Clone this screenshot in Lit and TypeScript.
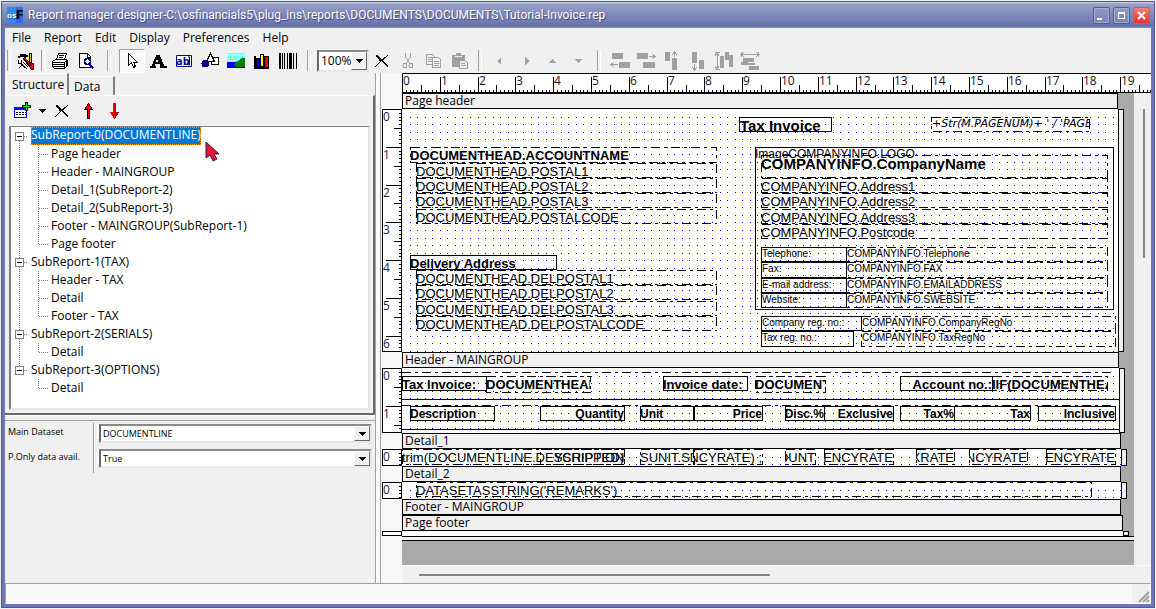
import { LitElement, html, css, svg, nothing, TemplateResult } from "lit";
import { customElement, property } from "lit/decorators.js";
import { styleMap } from "lit/directives/style-map.js";
import { classMap } from "lit/directives/class-map.js";

/* Pixels per centimetre at 100% zoom. */
const CM = 37.8;

interface Field {
  x: number;
  y: number;
  w: number;
  h: number;
  text?: string;
  font?: string;
  kind: "label" | "expr" | "shape";
  right?: boolean;
}

interface Band {
  title: string;
  height: number;
  inset: number;
  fields: Field[];
  rules?: number[];
}

const label = (x: number, y: number, w: number, h: number, text: string, font = "small", right = false): Field => ({ x, y, w, h, text, font, right, kind: "label" });
const expr = (x: number, y: number, w: number, h: number, text: string, font = "body", right = false): Field => ({ x, y, w, h, text, font, right, kind: "expr" });

const BANDS: Band[] = [
  {
    title: "Page header",
    height: 243,
    inset: 16,
    fields: [
      label(337, 8, 92, 15, "Tax Invoice", "title"),
      expr(529, 8, 158, 15, "+Str(M.PAGENUM)+ ' / 'PAGECOUNT", "page"),
      expr(8, 38, 306, 16, "DOCUMENTHEAD.ACCOUNTNAME", "bold"),
      expr(14, 54, 300, 15, "DOCUMENTHEAD.POSTAL1"),
      expr(14, 69, 300, 15, "DOCUMENTHEAD.POSTAL2"),
      expr(14, 84, 300, 15, "DOCUMENTHEAD.POSTAL3"),
      expr(14, 100, 300, 15, "DOCUMENTHEAD.POSTALCODE"),
      label(8, 146, 146, 15, "Delivery Address", "bold"),
      expr(14, 161, 300, 15, "DOCUMENTHEAD.DELPOSTAL1"),
      expr(14, 176, 300, 15, "DOCUMENTHEAD.DELPOSTAL2"),
      expr(14, 192, 300, 15, "DOCUMENTHEAD.DELPOSTAL3"),
      expr(14, 207, 300, 15, "DOCUMENTHEAD.DELPOSTALCODE"),
      { x: 353, y: 38, w: 358, h: 163, kind: "shape", text: "ImageCOMPANYINFO.LOGO", font: "image" },
      expr(359, 46, 346, 23, "COMPANYINFO.CompanyName", "company"),
      expr(359, 69, 346, 15, "COMPANYINFO.Address1"),
      expr(359, 84, 346, 15, "COMPANYINFO.Address2"),
      expr(359, 100, 346, 15, "COMPANYINFO.Address3"),
      expr(359, 115, 346, 15, "COMPANYINFO.Postcode"),
      label(359, 138, 85, 15, "Telephone:"),
      label(359, 153, 85, 16, "Fax:"),
      label(359, 169, 85, 15, "E-mail address:"),
      label(359, 184, 85, 15, "Website:"),
      expr(444, 138, 261, 15, "COMPANYINFO.Telephone", "small"),
      expr(444, 153, 261, 16, "COMPANYINFO.FAX", "small"),
      expr(444, 169, 261, 15, "COMPANYINFO.EMAILADDRESS", "small"),
      expr(444, 184, 261, 15, "COMPANYINFO.SWEBSITE", "small"),
      label(359, 207, 100, 15, "Company reg. no.:"),
      label(359, 222, 92, 16, "Tax reg. no.:"),
      expr(459, 207, 254, 15, "COMPANYINFO.CompanyRegNo", "small"),
      expr(459, 222, 254, 16, "COMPANYINFO.TaxRegNo", "small"),
    ],
  },
  {
    title: "Header - MAINGROUP",
    height: 65,
    inset: 15,
    rules: [31, 61],
    fields: [
      expr(0, 4, 712, 0, ""),
      expr(0, 37, 712, 0, ""),
      label(0, 8, 84, 15, "Tax Invoice:", "bold"),
      expr(84, 8, 104, 17, "DOCUMENTHEAD", "bold"),
      label(261, 8, 84, 15, "Invoice date:", "bold"),
      expr(353, 8, 70, 17, "DOCUMENTHEAD", "bold"),
      label(498, 8, 92, 15, "Account no.:", "bold", true),
      expr(590, 8, 115, 15, "IIF(DOCUMENTHEAD", "bold"),
      label(8, 38, 84, 15, "Description", "head"),
      label(138, 38, 84, 15, "Quantity", "head", true),
      label(238, 38, 54, 15, "Unit", "head"),
      label(291, 38, 69, 15, "Price", "head", true),
      label(383, 38, 39, 15, "Disc.%", "head", true),
      label(422, 38, 69, 15, "Exclusive", "head", true),
      label(498, 38, 54, 15, "Tax%", "head", true),
      label(552, 38, 76, 15, "Tax", "head", true),
      label(636, 38, 77, 15, "Inclusive", "head", true),
    ],
  },
  {
    title: "Detail_1",
    height: 17,
    inset: 13,
    fields: [
      expr(0, 0, 222, 16, "trim(DOCUMENTLINE.DESCRIPTION)"),
      expr(138, 0, 84, 16, "YSHIPPED)", "body", true),
      expr(238, 0, 54, 16, "SUNIT.SDESC"),
      expr(291, 0, 69, 16, "NCYRATE) ;", "body", true),
      expr(383, 0, 30, 16, "DISCOUNT", "body", true),
      expr(422, 0, 69, 16, "CURRENCYRATE", "body", true),
      expr(514, 0, 38, 16, "TAXRATE", "body", true),
      expr(567, 0, 58, 16, "CURRENCYRATE", "body", true),
      expr(644, 0, 69, 16, "CURRENCYRATE", "body", true),
    ],
  },
  {
    title: "Detail_2",
    height: 17,
    inset: 13,
    fields: [expr(14, 0, 675, 15, "DATASETASSTRING('REMARKS')")],
  },
  { title: "Footer - MAINGROUP", height: 0, inset: 13, fields: [] },
  { title: "Page footer", height: 5, inset: 11, fields: [] },
];

const TREE = [
  { name: "SubReport-0(DOCUMENTLINE)", children: ["Page header", "Header - MAINGROUP", "Detail_1(SubReport-2)", "Detail_2(SubReport-3)", "Footer - MAINGROUP(SubReport-1)", "Page footer"] },
  { name: "SubReport-1(TAX)", children: ["Header - TAX", "Detail", "Footer - TAX"] },
  { name: "SubReport-2(SERIALS)", children: ["Detail"] },
  { name: "SubReport-3(OPTIONS)", children: ["Detail"] },
];

/* Two-tone pixel icons, drawn on an 18 x 18 grid. */
const ICONS: Record<string, TemplateResult> = {
  tools: svg`<path d="M3 2h6v1h2v2H9v2H7V5H3v1H1V4h2z" fill="#000"/><path d="M7 6l8 10" stroke="#000" stroke-width="3"/><path d="M8 6l8 10" stroke="#d00" stroke-width="1.500"/><path d="M13 1v11" stroke="#000" stroke-width="3"/><path d="M13 2v8" stroke="#dd0" stroke-width="1"/><path d="M13 11h3v6h-2z" fill="#f00" stroke="#800"/><path d="M1.500 8v3h3V8M3 11l7 6M1.500 16.500l3-3M6 10l5 5" stroke="#000" fill="none"/>`,
  print: svg`<path d="M5.500 7.500l2-6h8l-2 6z" fill="#fff" stroke="#000"/><path d="M8 3.500h5M8 5.500h4" stroke="#000"/><path d="M1.500 9.500l3-2h11l1 1v5l-3 3h-10l-2-2z" fill="#fff" stroke="#000"/><path d="M2 10.500h11l3-2M13.500 11v5M2 12.500h11M2 14.500h11M15.500 9v5" stroke="#000" fill="none"/>`,
  preview: svg`<path d="M2.500 1.500h8l3 3v11h-11z" fill="#fff" stroke="#000"/><path d="M10.500 2v3h3" stroke="#000" fill="none"/><circle cx="10.500" cy="9.500" r="3" fill="#cff" stroke="#000080" stroke-width="1.500"/><path d="M12.500 12l4 4.500" stroke="#0000a0" stroke-width="2"/>`,
  pointer: svg`<path d="M5.500 1.500v12l3-3 2 5 2-1-2-4.500h3.500z" fill="#fff" stroke="#000"/>`,
  label: svg`<path d="M8 3h2l5 11h2v1h-6v-1h1l-1-3H6l-1 3h1v1H1v-1h2zM8 6l-2 4h4z" fill="#000" fill-rule="evenodd" stroke="#000"/>`,
  shapes: svg`<rect x="10.500" y="5.500" width="7" height="7" fill="#fff" stroke="#000"/><path d="M5.500 9.500l4-8 4 8z" fill="#fff" stroke="#000"/><circle cx="4.500" cy="11.500" r="4" fill="#000080"/>`,
  image: svg`<rect x="0" y="1" width="18" height="15" fill="#6ff"/><path d="M0 2.500h18M0 4.500h18M0 6.500h18" stroke="#fff" stroke-dasharray="1 1"/><path d="M0 8.500h11M0 3.500h18" stroke="#bff"/><rect x="4" y="4" width="3" height="3" fill="#ff6"/><path d="M0 10h9l-2 2 5 4H0z" fill="#00f"/><path d="M8 11l3-2 4-3h3v10h-7l-4-3z" fill="#008000"/><path d="M0 15h18v1H0z" fill="#00c"/>`,
  chart: svg`<path d="M1.500 4v11.500h14" stroke="#000" fill="none" stroke-width="2"/><path d="M3.500 6.500h3v9h-3z" fill="#00f" stroke="#000"/><path d="M7.500 2.500h3v12h-3z" fill="#ff0" stroke="#000"/><path d="M11.500 4.500h4v11h-4z" fill="#f00" stroke="#000"/>`,
  barcode: svg`<path d="M1 1v16M12 1v16" stroke="#000" stroke-width="2"/><path d="M3.500 1v16M5.500 1v16M8.500 1v16M10.500 1v16M14.500 1v16M17.500 1v16" stroke="#000"/>`,
  remove: svg`<path d="M3 3h2v1h1v1h1v1h1v1h2V6h1V5h2V4h1V3h1v1h-1v1h-1v1h-1v1h-1v1h-1v1h1v1h1v1h1v1h1v1h1v2h-1v-1h-1v-1h-1v-1h-1v-1h-1v-1H9v-1H8v1H7v1H6v1H5v1H4v1H3v1H2v-1h1v-1h1v-1h1v-1h1v-1h1V9H6V8H6V7H5V6H4V5H3z" fill="#000"/>`,
  cut: svg`<path d="M6.500 1v4l5 7M11.500 1v4l-5 7" stroke="#a0a0a0" fill="none"/><circle cx="6" cy="13.500" r="2" fill="none" stroke="#a0a0a0"/><circle cx="12" cy="13.500" r="2" fill="none" stroke="#a0a0a0"/>`,
  copy: svg`<path d="M1.500 2.500h6l2 2v8h-8z" fill="#f0f0f0" stroke="#a0a0a0"/><path d="M7.500 5.500h6l2 2v8h-8z" fill="#f0f0f0" stroke="#a0a0a0"/><path d="M3 5.500h4M3 7.500h4M3 9.500h4M9 9.500h5M9 11.500h5M9 13.500h5" stroke="#a0a0a0"/>`,
  paste: svg`<path d="M1 3h4V1h5v2h4v12H1z" fill="#a0a0a0"/><path d="M4 4h7" stroke="#f0f0f0"/><path d="M8.500 8.500h5l3 2v6h-8z" fill="#f0f0f0" stroke="#a0a0a0"/><path d="M10 11.500h4M10 13.500h5" stroke="#a0a0a0"/>`,
  left: svg`<path d="M10 5v8L6 9z" fill="#a0a0a0"/>`,
  right: svg`<path d="M8 5v8l4-4z" fill="#a0a0a0"/>`,
  up: svg`<path d="M5 11h8L9 7z" fill="#a0a0a0"/>`,
  down: svg`<path d="M5 7h8l-4 4z" fill="#a0a0a0"/>`,
  alignLeft: svg`<path d="M1 1h11v6H1zM8 10h11v6H8z" fill="#a0a0a0"/><path d="M0 12.500h7M3 10l-3 2.500L3 15" stroke="#a0a0a0" fill="none"/>`,
  alignRight: svg`<path d="M0 1h11v6H0zM6 10h12v6H6z" fill="#a0a0a0"/><path d="M12 4.500h6M15 2l3 2.500L15 7" stroke="#a0a0a0" fill="none"/>`,
  alignTop: svg`<path d="M2 0h5v9H2zM9 6h5v12H9z" fill="#a0a0a0"/><path d="M11.500 0v5M9 3l2.500-3L14 3" stroke="#a0a0a0" fill="none"/>`,
  alignBottom: svg`<path d="M3 0h5v11H3zM10 8h5v9h-5z" fill="#a0a0a0"/><path d="M5.500 12v6M3 15l2.500 3L8 15" stroke="#a0a0a0" fill="none"/>`,
  spaceV: svg`<path d="M5 4h4v12H5zM10 0h4v8h-4zM14 3h4v12h-4z" fill="#a0a0a0"/><path d="M2 1v16M0 4l2-3 2 3M0 14l2 3 2-3M0 .5h5M0 17.500h5" stroke="#a0a0a0" fill="none"/>`,
  spaceH: svg`<path d="M2 6h11v4H2zM0 10h7v3H0zM8 14h10v4H8zM5 11h9v2H5z" fill="#a0a0a0"/><path d="M0 2.500h18M3 0L0 2.500 3 5M15 0l3 2.500L15 5M.5 0v5M17.500 0v5" stroke="#a0a0a0" fill="none"/>`,
  addTable: svg`<rect x="1.500" y="5.500" width="12" height="10" fill="#fff" stroke="#00f"/><path d="M1 6.500h13" stroke="#00f" stroke-width="3"/><path d="M3 10.500h10M3 12.500h10" stroke="#000" stroke-dasharray="2 1"/><path d="M13.500 0v9M9 4.500h9" stroke="#000" stroke-width="3"/><path d="M13.500 1v7M10 4.500h7" stroke="#0f0" stroke-width="1"/>`,
  moveUp: svg`<path d="M9.500 1.500l-4 6h3v9h2v-9h3z" fill="#f00" stroke="#000"/>`,
  moveDown: svg`<path d="M9.500 16.500l-4-6h3v-9h2v9h3z" fill="#f00" stroke="#f00"/><path d="M9.500 16.500l4-6h-3v-9" stroke="#900" fill="none"/>`,
};

const icon = (name: string) => html`<svg class="icon" viewBox="0 0 18 18" width="18" height="18" shape-rendering="crispEdges" aria-hidden="true">${ICONS[name]}</svg>`;

@customElement("report-band")
export class ReportBand extends LitElement {
  @property({ attribute: false }) band!: Band;

  static styles = css`
    :host { display: block; }
    .caption {
      display: block; box-sizing: border-box; height: 16px; margin-left: 20px;
      border: 1px solid #000; background: #f0f0f0; color: #000;
      font: 12px/14px "Open Sans", "Noto Sans", sans-serif; padding-left: 2px;
    }
    .row { display: grid; grid-template-columns: 20px 1fr 6px; }
    .ruler { display: block; background: #fff; }
    .num { font: 12px "Open Sans", "Noto Sans", sans-serif; fill: #223; }
    .surface { position: relative; background: #fff; overflow: hidden; }
    .grid, .frames { position: absolute; left: 0; top: 0; }
    .handle { box-sizing: border-box; border: 1px solid #000; background: #f0f0f0; }
    .field { position: absolute; overflow: hidden; white-space: pre; color: #000; font-family: "Liberation Sans", Arial, sans-serif; display: flex; }
    .right { justify-content: flex-end; }
    .body { font-size: 13px; line-height: 17px; }
    .bold { font-size: 13px; line-height: 17px; font-weight: bold; }
    .head { font-size: 12px; line-height: 16px; font-weight: bold; }
    .small { font-size: 10px; line-height: 14px; padding-left: 1px; }
    .title { font-size: 15px; line-height: 18px; font-weight: bold; padding-left: 1px; }
    .company { font-size: 15px; line-height: 18px; font-weight: bold; }
    .page { font: italic 11px/14px "DejaVu Sans", sans-serif; padding-left: 1px; }
    .image { font-size: 12px; line-height: 14px; }
  `;

  private ruler(h: number) {
    let d = "";
    for (let i = 1; i * CM / 10 < h - 1; i++) {
      const y = Math.round((i * CM) / 10) + 0.5;
      d += `M${i % 10 === 0 ? 4 : i % 5 === 0 ? 12 : 17} ${y}H20`;
    }
    const nums = h < 10 ? [] : Array.from({ length: Math.floor(h / CM) + 1 }, (_, i) => i);
    return html`<svg class="ruler" width="20" height=${h} shape-rendering="crispEdges">
      <rect x="0.5" y="0.5" width="19" height=${h - 1} fill="none" stroke="#000"></rect>
      <path d=${d} stroke="#000"></path>
      ${nums.map((n) => svg`<text class="num" x="1" y=${Math.round(n * CM) + 12}>${n}</text>`)}
    </svg>`;
  }

  private dots(h: number) {
    let d = "";
    for (let y = 1; y * CM / 5 < h - 1; y++)
      for (let x = 1; x < 96; x++) d += `M${Math.round((x * CM) / 5)} ${Math.round((y * CM) / 5) + 0.5}h1`;
    return html`<svg class="grid" width="100%" height=${h} shape-rendering="crispEdges"><path d=${d} stroke="#0000ff"></path></svg>`;
  }

  render() {
    const { title, height, inset, fields, rules } = this.band;
    return html`
      <div class="caption" style=${styleMap({ marginRight: `${inset}px` })}>${title}</div>
      ${height === 0 ? nothing : html`
        <div class="row" style=${styleMap({ marginRight: `${inset - 6}px` })}>
          ${this.ruler(height)}
          <div class="surface">
            ${this.dots(height)}
            ${fields.map((f) => f.text
              ? html`<span class=${classMap({ field: true, [f.font ?? "body"]: true, right: !!f.right })}
                  style=${styleMap({ left: `${f.x}px`, top: `${f.y}px`, width: `${f.w}px`, height: `${f.h + 1}px` })}>${f.text}</span>`
              : nothing)}
            <svg class="frames" width="100%" height=${height} shape-rendering="crispEdges">
              ${fields.map((f) => svg`<path fill="none" stroke="#000" stroke-dasharray=${f.kind === "expr" ? "9 4 3 4" : "none"}
                d=${f.h ? `M${f.x + 0.5} ${f.y + 0.5}h${f.w}v${f.h - 1}h${-f.w}z` : `M${f.x} ${f.y + 0.5}h${f.w}`}></path>`)}
              ${(rules ?? []).map((y) => svg`<path d=${`M0 ${y + 0.5}H2000`} stroke="#000"></path>`)}
            </svg>
          </div>
          <div class="handle"></div>
        </div>`}
    `;
  }
}

@customElement("app-root")
export class AppRoot extends LitElement {
  static styles = css`
    :host { display: block; height: 100vh; box-sizing: border-box; padding: 1px; background: #eef1f8; font: 12px/16px "Open Sans", "Noto Sans", sans-serif; color: #000; }
    * { box-sizing: border-box; }
    button, select { font: inherit; color: inherit; }
    .window { height: 100%; display: flex; flex-direction: column; border: solid #4f5b96; border-width: 1px; background: #6c78b2; padding: 0 3px 3px; }
    .title { flex: none; height: 26px; margin: 0 -3px; padding: 0 4px; display: flex; align-items: center; gap: 3px; color: #fff; background: linear-gradient(#c0c6e0 0 1px, #969fc9 2px, #7580b4 70%, #6570a8 90%, #7a86bc); text-shadow: 1px 1px 1px #3b4679; }
    .title h1 { flex: 1; margin: 0 0 0 2px; font: 400 12px/20px Roboto, "Open Sans", sans-serif; white-space: nowrap; overflow: hidden; }
    .logo { display: block; margin-left: 1px; }
    .logo-text { font: bold 8px "Liberation Sans", sans-serif; fill: #fff; }
    .logo-mark { font: bold 12px "Liberation Sans", sans-serif; fill: #001; }
    .sys { width: 17px; height: 17px; padding: 0; border: 1px solid #4e5a98; border-radius: 2px; background: linear-gradient(#929bc8, #7681b6); display: grid; place-items: center; box-shadow: inset 0 0 0 1px #a5adcf; }
    .close { background: linear-gradient(#f08078, #e83028); border-color: #c85a68; box-shadow: none; }
    .menu { flex: none; height: 20px; display: flex; gap: 13px; padding: 0 7px; background: #f0f0f0; }
    .menu button { border: 0; background: none; padding: 0; line-height: 18px; }
    .tools { flex: none; height: 25px; display: flex; align-items: center; background: #f0f0f0; }
    .sep { height: 21px; display: flex; justify-content: center; }
    .sep::before { content: ""; width: 2px; border-left: 1px solid #a0a0a0; border-right: 1px solid #fff; }
    .s8 { width: 8px; } .s14 { width: 14px; } .s16 { width: 16px; } .s20 { width: 20px; }
    .tool { width: 26px; height: 24px; padding: 0; border: 0; background: none; display: grid; place-items: center; }
    .pressed { background: #f8f8f8; border: 1px solid; border-color: #a0a0a0 #fff #fff #a0a0a0; }
    .icon { display: block; overflow: visible; }
    .abtext { font: bold 11px "Open Sans", sans-serif; fill: #000080; }
    .combo { position: relative; display: block; border: 2px solid; border-color: #8a8a8a #e8e8e8 #e8e8e8 #696969; background: #fff; height: 19px; }
    .combo select { display: block; width: 100%; height: 100%; appearance: none; border: 0; background: #fff; padding: 0 16px 0 2px; outline: 0; }
    .drop { position: absolute; right: 0; top: 0; bottom: 0; width: 16px; background: #f0f0f0; border: 1px solid; border-color: #fff #696969 #696969 #fff; display: grid; place-items: center; pointer-events: none; }
    .zoom { width: 52px; height: 22px; }
    .main { flex: 1; min-height: 0; display: grid; grid-template-columns: 370px 6px minmax(0, 1fr); background: #f0f0f0; }
    .side { display: flex; flex-direction: column; min-width: 0; }
    .tabs { display: flex; align-items: flex-end; height: 22px; padding-left: 1px; }
    .tabs button { border: 0; border-right: 2px solid #808080; border-top: 1px solid #fff; background: #f0f0f0; text-align: left; padding: 0 0 0 5px; height: 19px; width: 46px; line-height: 17px; }
    .tabs .active { height: 22px; width: 63px; line-height: 18px; border-left: 1px solid #fff; }
    .page { flex: none; display: flex; flex-direction: column; border: solid; border-width: 1px 2px 2px 0; border-color: #fff #696969 #696969 #fff; padding: 0 3px 3px 4px; height: 320px; }
    .treebar { flex: none; display: flex; align-items: center; height: 30px; }
    .treebar button { border: 0; padding: 0; background: none; width: 26px; height: 24px; display: grid; place-items: center; }
    .treebar .arrow { width: 14px; }
    .tree { position: relative; flex: 1; background: #fff; border: solid; border-width: 1px 2px 2px; border-color: #808080 #e3e3e3 #e3e3e3 #808080; }
    .tree ul { margin: 0; padding: 0; list-style: none; }
    .node { display: flex; height: 18px; line-height: 16px; align-items: center; white-space: nowrap; }
    .node svg { flex: none; display: block; }
    .selected { background: #0078d7; color: #fff; outline: 1px dotted #f90; outline-offset: -1px; height: 18px; }
    .cursor { position: absolute; left: 194px; top: 14px; }
    .split { height: 6px; border-top: 1px solid #fff; border-bottom: 1px solid #a0a0a0; }
    .props { display: grid; grid-template-columns: 87px minmax(0, 1fr); font-size: 9px; align-content: start; padding: 2px 3px 0 2px; }
    .props label { padding: 3px 0 0 1px; height: 25px; line-height: 12px; border-right: 1px solid #a0a0a0; }
    .props .combo { margin: 1px 0 5px 5px; box-shadow: -4px -2px 0 -2px #fff; }
    .gutter { border: solid #a0a0a0; border-width: 0 1px 0 1px; background: #fafafa; }
    .designer { display: grid; grid-template-rows: 20px minmax(0, 1fr) 18px; background: #f8f8fb; min-width: 0; padding-left: 1px; }
    .hruler { display: block; width: calc(100% - 20px); height: 20px; margin-left: 20px; overflow: hidden; background: #fff; }
    .num { font: 12px "Open Sans", "Noto Sans", sans-serif; fill: #112; }
    .view { display: grid; grid-template-columns: minmax(0, 1fr) 17px; min-height: 0; }
    .paper { overflow: hidden; background: linear-gradient(to right, #f8f8fb 20px, #a9a9a9 20px); }
    .end { height: 5px; margin-left: 20px; border: solid #000; border-width: 1px 0; background: #f0f0f0; }
    .vscroll { background: #f0f0f0; padding: 16px 0 0 9px; }
    .vthumb { width: 2px; height: 149px; background: #858585; }
    .hscroll { background: #f0f0f0; margin-left: 20px; padding: 8px 0 0 17px; border-top: 1px solid #fff; }
    .hthumb { width: 48%; height: 2px; background: #858585; }
    .status { flex: none; height: 21px; background: #f9f9fc; border: 1px solid; border-color: #a0a0a0 #fff #fff #a0a0a0; display: flex; justify-content: flex-end; align-items: flex-end; }
    .grip { display: block; background: #f0f0f0; }
  `;

  private tool(name: string, title: string, pressed = false) {
    return html`<button class=${classMap({ tool: true, pressed })} title=${title} aria-label=${title}>${icon(name)}</button>`;
  }

  private drop() {
    return html`<span class="drop"><svg width="7" height="4" shape-rendering="crispEdges"><path d="M0 0h7L3.500 4z"></path></svg></span>`;
  }

  private guide(child: boolean, first: boolean, last: boolean, lastGroup: boolean) {
    const d = child
      ? `${lastGroup ? "" : "M8.500 0V18"}M27.500 0V${last ? 9 : 18}M28 9.500H37`
      : `M13 9.500H17${first ? "" : "M8.500 0V5"}${lastGroup ? "" : "M8.500 14V18"}`;
    return html`<svg width=${child ? 40 : 20} height="18" shape-rendering="crispEdges">
      <path d=${d} fill="none" stroke="#808080" stroke-dasharray="1 1"></path>
      ${child ? nothing : svg`<rect x="4.500" y="5.500" width="8" height="8" fill="#fff" stroke="#808080"></rect><path d="M6 9.500h5" stroke="#000"></path>`}
    </svg>`;
  }

  private horizontalRuler() {
    let d = "";
    for (let i = 0; i < 200; i++) {
      const x = Math.round((i * CM) / 10) + 0.5;
      d += `M${x} ${i % 10 === 0 ? 4 : i % 5 === 0 ? 12 : 17}V20`;
    }
    return html`<svg class="hruler" shape-rendering="crispEdges">
      <path d=${d} stroke="#000"></path>
      <path d="M0 .5H3000M0 19.500H3000M.5 0V20" stroke="#000"></path>
      ${Array.from({ length: 20 }, (_, n) => svg`<text class="num" x=${Math.round(n * CM) + 1} y="12">${n}</text>`)}
    </svg>`;
  }

  render() {
    return html`
      <div class="window">
        <header class="title">
          <svg class="logo" width="16" height="16"><rect width="16" height="16" fill="#2f6fe0"></rect><rect width="9" height="16" fill="#3d84f0"></rect><text class="logo-text" x="0" y="11">os</text><text class="logo-mark" x="9" y="12">F</text></svg>
          <h1>Report manager designer-C:\\osfinancials5\\plug_ins\\reports\\DOCUMENTS\\DOCUMENTS\\Tutorial-Invoice.rep</h1>
          <button class="sys" aria-label="Minimize"><svg width="11" height="11"><path d="M1 9h5" stroke="#fff" stroke-width="2"></path></svg></button>
          <button class="sys" aria-label="Maximize"><svg width="11" height="11" shape-rendering="crispEdges"><path d="M2.500 3v5.500h6V3zM2 2.500h7" fill="none" stroke="#fff"></path></svg></button>
          <button class="sys close" aria-label="Close"><svg width="11" height="11"><path d="M2 2l7 7M9 2L2 9" stroke="#fff" stroke-width="2"></path></svg></button>
        </header>
        <nav class="menu">${["File", "Report", "Edit", "Display", "Preferences", "Help"].map((m) => html`<button>${m}</button>`)}</nav>
        <div class="tools" role="toolbar">
          <span class="sep s8"></span>${this.tool("tools", "Page setup")}
          <span class="sep s8"></span>${this.tool("print", "Print")}${this.tool("preview", "Preview")}
          <span class="sep s20"></span>${this.tool("pointer", "Select", true)}${this.tool("label", "Label")}
          <button class="tool" aria-label="Expression"><svg class="icon" width="18" height="18"><path d="M1.500 3.500h15v11h-15z" fill="#fff" stroke="#000080"></path><path d="M13 5h1.500v8H13" fill="none" stroke="#000"></path><text class="abtext" x="1" y="13">ab</text></svg></button>
          ${this.tool("shapes", "Shape")}${this.tool("image", "Image")}${this.tool("chart", "Chart")}${this.tool("barcode", "Barcode")}
          <span class="sep s16"></span>
          <label class="combo zoom"><select aria-label="Zoom"><option>100%</option></select>${this.drop()}</label>
          ${this.tool("remove", "Delete")}${this.tool("cut", "Cut")}${this.tool("copy", "Copy")}${this.tool("paste", "Paste")}
          <span class="sep s14"></span>
          ${this.tool("left", "Move left")}${this.tool("right", "Move right")}${this.tool("up", "Move up")}${this.tool("down", "Move down")}
          <span class="sep s16"></span>
          ${this.tool("alignLeft", "Align left")}${this.tool("alignRight", "Align right")}${this.tool("alignTop", "Align top")}${this.tool("alignBottom", "Align bottom")}${this.tool("spaceV", "Space vertically")}${this.tool("spaceH", "Space horizontally")}
        </div>
        <main class="main">
          <aside class="side">
            <div class="tabs" role="tablist"><button class="active" role="tab">Structure</button><button role="tab">Data</button></div>
            <section class="page">
              <div class="treebar">
                <button aria-label="Add">${icon("addTable")}</button>
                <button class="arrow" aria-label="Add options"><svg width="7" height="4" shape-rendering="crispEdges"><path d="M0 0h7L3.500 4z"></path></svg></button>
                <button aria-label="Delete">${icon("remove")}</button>
                <button aria-label="Up">${icon("moveUp")}</button>
                <button aria-label="Down">${icon("moveDown")}</button>
              </div>
              <div class="tree">
                <ul role="tree">
                  ${TREE.map((g, i) => html`
                    <li role="treeitem">
                      <div class="node">${this.guide(false, i === 0, false, i === TREE.length - 1)}<span class=${i === 0 ? "selected" : ""}>${g.name}</span></div>
                      <ul role="group">
                        ${g.children.map((c, j) => html`<li class="node" role="treeitem">${this.guide(true, false, j === g.children.length - 1, i === TREE.length - 1)}<span>${c}</span></li>`)}
                      </ul>
                    </li>`)}
                </ul>
                <svg class="cursor" width="15" height="21"><path d="M1 1v16l4-3 3 6 4-2-3-5h5z" fill="#f0103c" stroke="#223" stroke-width="1"></path></svg>
              </div>
            </section>
            <div class="split"></div>
            <section class="props">
              <label for="dataset">Main Dataset</label>
              <div class="combo"><select id="dataset"><option>DOCUMENTLINE</option></select>${this.drop()}</div>
              <label for="avail">P.Only data avail.</label>
              <div class="combo"><select id="avail"><option>True</option><option>False</option></select>${this.drop()}</div>
            </section>
          </aside>
          <div class="gutter"></div>
          <section class="designer">
            ${this.horizontalRuler()}
            <div class="view">
              <div class="paper">
                ${BANDS.map((b) => html`<report-band .band=${b}></report-band>`)}
                <div class="end"></div>
              </div>
              <div class="vscroll"><div class="vthumb"></div></div>
            </div>
            <div class="hscroll"><div class="hthumb"></div></div>
          </section>
        </main>
        <footer class="status"><svg class="grip" width="18" height="19"><path d="M7 18L17 8M11 18l6-6M15 18l2-2" stroke="#a0a0a0" stroke-width="2"></path></svg></footer>
      </div>
    `;
  }
}
